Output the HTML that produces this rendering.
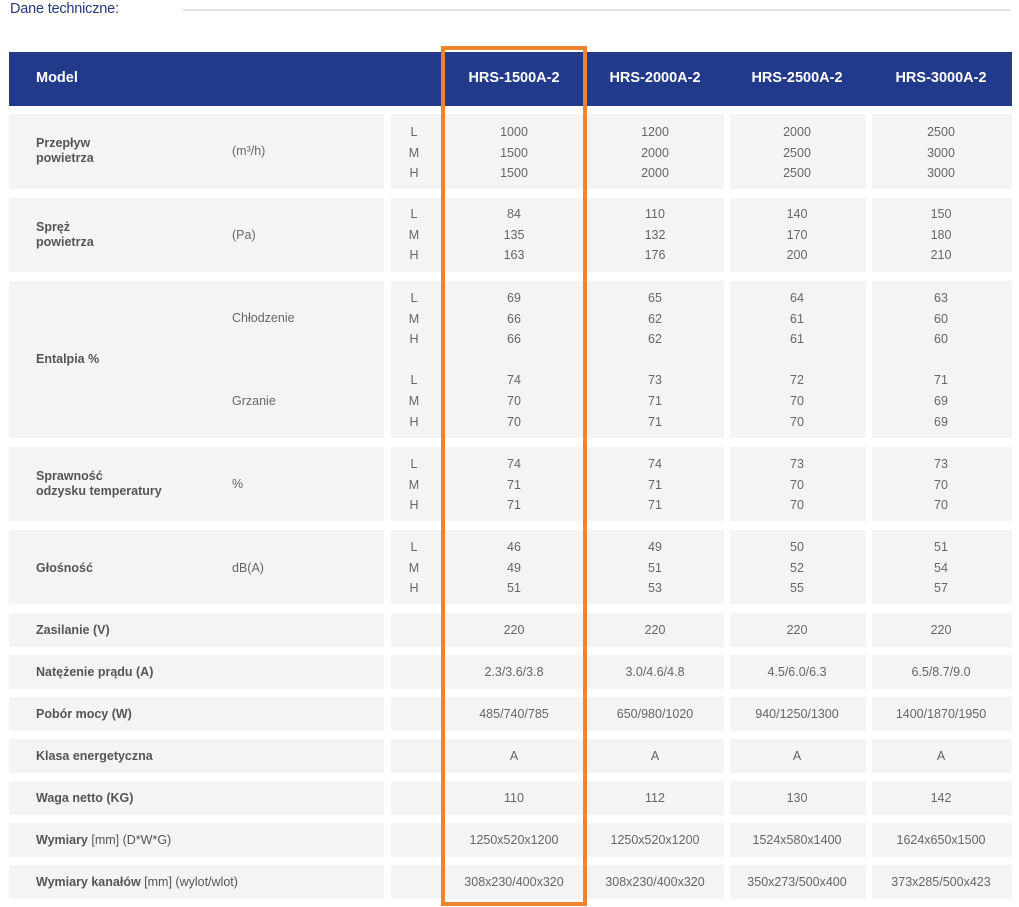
<!DOCTYPE html>
<html><head><meta charset="utf-8"><style>
*{margin:0;padding:0;box-sizing:border-box}
body{width:1019px;height:907px;background:#fff;position:relative;overflow:hidden;font-family:"Liberation Sans",sans-serif;color:#666;font-size:12.5px}
.a{position:absolute}
.title{left:10px;top:1px;font-size:14.5px;color:#27397a;letter-spacing:-0.2px}
.line{left:183px;top:9px;width:827px;height:2px;background:#e2e2e2}
.hdr{left:9px;top:52px;width:1003px;height:54px;background:#233a8a}
.h{position:absolute;top:51px;height:54px;line-height:54px;color:#fff;font-weight:bold;font-size:14.5px;text-align:center;width:140px;margin-left:-70px}
.c{position:absolute;background:#f4f4f4}
.t{position:absolute;text-align:center;width:140px;margin-left:-70px;line-height:20.6px}
.lb{position:absolute;left:36px;font-weight:bold;color:#555;line-height:15px}
.u{position:absolute;left:232px;color:#666}
.box{left:441px;top:46px;width:146px;height:860px;border:4px solid #f0832f}
</style></head><body>
<div class="a title">Dane techniczne:</div>
<div class="a line"></div>
<div class="a hdr"></div>
<div class="h" style="left:36px;margin-left:0;text-align:left">Model</div>
<div class="h" style="left:514px">HRS-1500A-2</div>
<div class="h" style="left:655px">HRS-2000A-2</div>
<div class="h" style="left:797px">HRS-2500A-2</div>
<div class="h" style="left:941px">HRS-3000A-2</div>

<div class="c" style="left:9px;top:114px;width:375px;height:75px"></div>
<div class="c" style="left:391px;top:114px;width:196px;height:75px"></div>
<div class="c" style="left:587px;top:114px;width:137px;height:75px"></div>
<div class="c" style="left:730px;top:114px;width:136px;height:75px"></div>
<div class="c" style="left:872px;top:114px;width:140px;height:75px"></div>

<div class="c" style="left:9px;top:198px;width:375px;height:74px"></div>
<div class="c" style="left:391px;top:198px;width:196px;height:74px"></div>
<div class="c" style="left:587px;top:198px;width:137px;height:74px"></div>
<div class="c" style="left:730px;top:198px;width:136px;height:74px"></div>
<div class="c" style="left:872px;top:198px;width:140px;height:74px"></div>

<div class="c" style="left:9px;top:281px;width:375px;height:157px"></div>
<div class="c" style="left:391px;top:281px;width:196px;height:157px"></div>
<div class="c" style="left:587px;top:281px;width:137px;height:157px"></div>
<div class="c" style="left:730px;top:281px;width:136px;height:157px"></div>
<div class="c" style="left:872px;top:281px;width:140px;height:157px"></div>

<div class="c" style="left:9px;top:447px;width:375px;height:74px"></div>
<div class="c" style="left:391px;top:447px;width:196px;height:74px"></div>
<div class="c" style="left:587px;top:447px;width:137px;height:74px"></div>
<div class="c" style="left:730px;top:447px;width:136px;height:74px"></div>
<div class="c" style="left:872px;top:447px;width:140px;height:74px"></div>

<div class="c" style="left:9px;top:530px;width:375px;height:74px"></div>
<div class="c" style="left:391px;top:530px;width:196px;height:74px"></div>
<div class="c" style="left:587px;top:530px;width:137px;height:74px"></div>
<div class="c" style="left:730px;top:530px;width:136px;height:74px"></div>
<div class="c" style="left:872px;top:530px;width:140px;height:74px"></div>

<div class="lb" style="top:136px">Przepływ<br>powietrza</div><div class="u" style="top:144px">(m³/h)</div>
<div class="t" style="left:414px;top:122px">L<br>M<br>H</div>
<div class="t" style="left:514px;top:122px">1000<br>1500<br>1500</div>
<div class="t" style="left:655px;top:122px">1200<br>2000<br>2000</div>
<div class="t" style="left:797px;top:122px">2000<br>2500<br>2500</div>
<div class="t" style="left:941px;top:122px">2500<br>3000<br>3000</div>

<div class="lb" style="top:220px">Spręż<br>powietrza</div><div class="u" style="top:228px">(Pa)</div>
<div class="t" style="left:414px;top:204px">L<br>M<br>H</div>
<div class="t" style="left:514px;top:204px">84<br>135<br>163</div>
<div class="t" style="left:655px;top:204px">110<br>132<br>176</div>
<div class="t" style="left:797px;top:204px">140<br>170<br>200</div>
<div class="t" style="left:941px;top:204px">150<br>180<br>210</div>

<div class="lb" style="top:352px">Entalpia %</div>
<div class="u" style="top:311px">Chłodzenie</div>
<div class="u" style="top:394px">Grzanie</div>
<div class="t" style="left:414px;top:288px">L<br>M<br>H<br>&nbsp;<br>L<br>M<br>H</div>
<div class="t" style="left:514px;top:288px">69<br>66<br>66<br>&nbsp;<br>74<br>70<br>70</div>
<div class="t" style="left:655px;top:288px">65<br>62<br>62<br>&nbsp;<br>73<br>71<br>71</div>
<div class="t" style="left:797px;top:288px">64<br>61<br>61<br>&nbsp;<br>72<br>70<br>70</div>
<div class="t" style="left:941px;top:288px">63<br>60<br>60<br>&nbsp;<br>71<br>69<br>69</div>

<div class="lb" style="top:469px">Sprawność<br>odzysku temperatury</div><div class="u" style="top:477px">%</div>
<div class="t" style="left:414px;top:454px">L<br>M<br>H</div>
<div class="t" style="left:514px;top:454px">74<br>71<br>71</div>
<div class="t" style="left:655px;top:454px">74<br>71<br>71</div>
<div class="t" style="left:797px;top:454px">73<br>70<br>70</div>
<div class="t" style="left:941px;top:454px">73<br>70<br>70</div>

<div class="lb" style="top:561px">Głośność</div><div class="u" style="top:561px">dB(A)</div>
<div class="t" style="left:414px;top:537px">L<br>M<br>H</div>
<div class="t" style="left:514px;top:537px">46<br>49<br>51</div>
<div class="t" style="left:655px;top:537px">49<br>51<br>53</div>
<div class="t" style="left:797px;top:537px">50<br>52<br>55</div>
<div class="t" style="left:941px;top:537px">51<br>54<br>57</div>

<div class="c" style="left:9px;top:613px;width:375px;height:34px"></div><div class="c" style="left:391px;top:613px;width:196px;height:34px"></div><div class="c" style="left:587px;top:613px;width:137px;height:34px"></div><div class="c" style="left:730px;top:613px;width:136px;height:34px"></div><div class="c" style="left:872px;top:613px;width:140px;height:34px"></div>
<div class="lb" style="top:623px">Zasilanie (V)</div>
<div class="t" style="left:514px;top:620px">220</div><div class="t" style="left:655px;top:620px">220</div><div class="t" style="left:797px;top:620px">220</div><div class="t" style="left:941px;top:620px">220</div>

<div class="c" style="left:9px;top:655px;width:375px;height:34px"></div><div class="c" style="left:391px;top:655px;width:196px;height:34px"></div><div class="c" style="left:587px;top:655px;width:137px;height:34px"></div><div class="c" style="left:730px;top:655px;width:136px;height:34px"></div><div class="c" style="left:872px;top:655px;width:140px;height:34px"></div>
<div class="lb" style="top:665px">Natężenie prądu (A)</div>
<div class="t" style="left:514px;top:662px">2.3/3.6/3.8</div><div class="t" style="left:655px;top:662px">3.0/4.6/4.8</div><div class="t" style="left:797px;top:662px">4.5/6.0/6.3</div><div class="t" style="left:941px;top:662px">6.5/8.7/9.0</div>

<div class="c" style="left:9px;top:697px;width:375px;height:34px"></div><div class="c" style="left:391px;top:697px;width:196px;height:34px"></div><div class="c" style="left:587px;top:697px;width:137px;height:34px"></div><div class="c" style="left:730px;top:697px;width:136px;height:34px"></div><div class="c" style="left:872px;top:697px;width:140px;height:34px"></div>
<div class="lb" style="top:707px">Pobór mocy (W)</div>
<div class="t" style="left:514px;top:704px">485/740/785</div><div class="t" style="left:655px;top:704px">650/980/1020</div><div class="t" style="left:797px;top:704px">940/1250/1300</div><div class="t" style="left:941px;top:704px">1400/1870/1950</div>

<div class="c" style="left:9px;top:739px;width:375px;height:34px"></div><div class="c" style="left:391px;top:739px;width:196px;height:34px"></div><div class="c" style="left:587px;top:739px;width:137px;height:34px"></div><div class="c" style="left:730px;top:739px;width:136px;height:34px"></div><div class="c" style="left:872px;top:739px;width:140px;height:34px"></div>
<div class="lb" style="top:749px">Klasa energetyczna</div>
<div class="t" style="left:514px;top:746px">A</div><div class="t" style="left:655px;top:746px">A</div><div class="t" style="left:797px;top:746px">A</div><div class="t" style="left:941px;top:746px">A</div>

<div class="c" style="left:9px;top:781px;width:375px;height:34px"></div><div class="c" style="left:391px;top:781px;width:196px;height:34px"></div><div class="c" style="left:587px;top:781px;width:137px;height:34px"></div><div class="c" style="left:730px;top:781px;width:136px;height:34px"></div><div class="c" style="left:872px;top:781px;width:140px;height:34px"></div>
<div class="lb" style="top:791px">Waga netto (KG)</div>
<div class="t" style="left:514px;top:788px">110</div><div class="t" style="left:655px;top:788px">112</div><div class="t" style="left:797px;top:788px">130</div><div class="t" style="left:941px;top:788px">142</div>

<div class="c" style="left:9px;top:823px;width:375px;height:34px"></div><div class="c" style="left:391px;top:823px;width:196px;height:34px"></div><div class="c" style="left:587px;top:823px;width:137px;height:34px"></div><div class="c" style="left:730px;top:823px;width:136px;height:34px"></div><div class="c" style="left:872px;top:823px;width:140px;height:34px"></div>
<div class="lb" style="top:833px">Wymiary <span style="font-weight:normal">[mm] (D*W*G)</span></div>
<div class="t" style="left:514px;top:830px">1250x520x1200</div><div class="t" style="left:655px;top:830px">1250x520x1200</div><div class="t" style="left:797px;top:830px">1524x580x1400</div><div class="t" style="left:941px;top:830px">1624x650x1500</div>

<div class="c" style="left:9px;top:865px;width:375px;height:34px"></div><div class="c" style="left:391px;top:865px;width:196px;height:34px"></div><div class="c" style="left:587px;top:865px;width:137px;height:34px"></div><div class="c" style="left:730px;top:865px;width:136px;height:34px"></div><div class="c" style="left:872px;top:865px;width:140px;height:34px"></div>
<div class="lb" style="top:875px">Wymiary kanałów <span style="font-weight:normal">[mm] (wylot/wlot)</span></div>
<div class="t" style="left:514px;top:872px">308x230/400x320</div><div class="t" style="left:655px;top:872px">308x230/400x320</div><div class="t" style="left:797px;top:872px">350x273/500x400</div><div class="t" style="left:941px;top:872px">373x285/500x423</div>

<div class="a box"></div>
</body></html>
